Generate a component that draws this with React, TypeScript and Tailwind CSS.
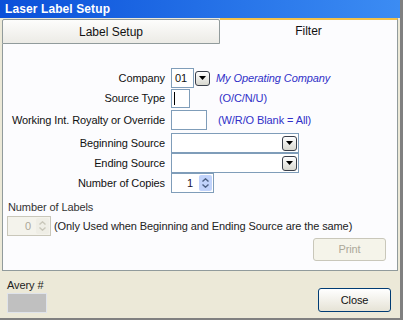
import React from "react";

const DropBtn = () => (
  <div className="w-[15px] h-[15px] rounded-[3px] border border-[#3a3f4a] bg-gradient-to-b from-[#ffffff] to-[#d8d8d0] flex items-center justify-center">
    <svg width="7" height="4" viewBox="0 0 7 4"><path d="M0 0h7L3.5 4z" fill="#000" /></svg>
  </div>
);

const Spin = ({ disabled }: { disabled?: boolean }) => (
  <div className={`w-[13px] h-[16px] flex flex-col items-center justify-center gap-[2px] rounded-[2px] ${disabled ? "bg-[#efeee6]" : "bg-[#c1d3fb]"}`}>
    <svg width="7" height="4" viewBox="0 0 7 4"><path d="M0.5 3.5L3.5 0.8L6.5 3.5" fill="none" stroke={disabled ? "#c9c7ba" : "#4d6185"} strokeWidth="1.4" /></svg>
    <svg width="7" height="4" viewBox="0 0 7 4"><path d="M0.5 0.5L3.5 3.2L6.5 0.5" fill="none" stroke={disabled ? "#c9c7ba" : "#4d6185"} strokeWidth="1.4" /></svg>
  </div>
);

const Row = ({ label, children, className }: { label: string; children: React.ReactNode; className: string }) => (
  <div className={`flex items-center ${className}`}>
    <div className="w-[163px] text-right pr-[1px] whitespace-nowrap">{label}</div>
    <div className="ml-[5px] flex items-center h-full">{children}</div>
  </div>
);

export default function App() {
  return (
    <div
      className="w-[403px] h-[320px] bg-[#ece9d8] text-[11px] tracking-[-0.1px] text-[#111] flex flex-col border-r-[3px] border-b-[2px] border-[#808080] overflow-hidden"
      style={{ fontFamily: '"Liberation Sans", Arial, sans-serif' }}
    >
      <div className="h-[18px] shrink-0 bg-gradient-to-r from-[#0b4fd9] to-[#3c8cf3] flex items-center pl-[5px]">
        <span className="text-white font-bold text-[12px] tracking-[0.1px]">Laser Label Setup</span>
      </div>
      <div className="ml-[2px] w-[396px] flex flex-col">
        <div className="h-[26px] flex">
          <div className="w-[218px] mt-[1px] h-[25px] border border-[#919b9c] rounded-t-[2px] bg-gradient-to-b from-[#fdfdfc] to-[#ecebe6] flex items-center justify-center text-[12px] tracking-[0px]">
            Label Setup
          </div>
          <div className="flex-1 h-[26px] bg-[#fcfcfe] border-t-[2px] border-t-[#f2c14a] border-r border-r-[#919b9c] flex items-center justify-center text-[12px] tracking-[0px] pb-[3px]">
            Filter
          </div>
        </div>
        <div className="h-[227px] bg-[#fcfcfe] border border-t-0 border-[#919b9c] flex flex-col">
          <Row label="Company" className="mt-[24px] h-[20px]">
            <div className="w-[23px] h-[20px] border border-[#7f9db9] bg-white flex items-center pl-[3px] text-[11px]">01</div>
            <div className="ml-[1px]"><DropBtn /></div>
            <span className="ml-[6px] italic text-[#3030c8]">My Operating Company</span>
          </Row>
          <Row label="Source Type" className="mt-[1px] h-[19px]">
            <div className="w-[19px] h-[19px] border border-[#7f9db9] bg-white flex items-center pl-[2px]">
              <div className="w-[1px] h-[13px] bg-black" />
            </div>
            <span className="ml-[29px] text-[#3030c8]">(O/C/N/U)</span>
          </Row>
          <Row label="Working Int. Royalty or Override" className="mt-[2px] h-[20px]">
            <div className="w-[36px] h-[20px] border border-[#7f9db9] bg-white" />
            <span className="ml-[11px] text-[#3030c8]">(W/R/O Blank = All)</span>
          </Row>
          <Row label="Beginning Source" className="mt-[3px] h-[20px]">
            <div className="w-[128px] h-[20px] border border-[#7f9db9] bg-white flex items-center justify-end pr-[1px]">
              <DropBtn />
            </div>
          </Row>
          <Row label="Ending Source" className="h-[20px]">
            <div className="w-[128px] h-[20px] border border-[#7f9db9] bg-white flex items-center justify-end pr-[1px]">
              <DropBtn />
            </div>
          </Row>
          <Row label="Number of Copies" className="h-[20px]">
            <div className="w-[43px] h-[20px] border border-[#7f9db9] bg-white flex items-center justify-end pr-[1px]">
              <span className="mr-[6px] text-[#1a1030]">1</span>
              <Spin />
            </div>
          </Row>
          <div className="mt-[7px] ml-[5px] h-[14px] leading-[14px] text-[#333]">Number of Labels</div>
          <div className="mt-[2px] ml-[4px] flex items-center">
            <div className="w-[44px] h-[20px] border border-[#c9c7ba] bg-[#f4f3ec] flex items-center justify-end pr-[1px]">
              <span className="mr-[5px] text-[#aca899]">0</span>
              <Spin disabled />
            </div>
            <span className="ml-[3px] text-[#222]">(Only Used when Beginning and Ending Source are the same)</span>
          </div>
          <div className="flex justify-end mt-[2px] mr-[11px]">
            <div className="w-[73px] h-[23px] border border-[#c9c7ba] rounded-[3px] bg-[#f5f4ea] flex items-center justify-center text-[#aca899]">Print</div>
          </div>
        </div>
      </div>
      <div className="flex-1 flex items-end pl-[7px] pr-[9px] pb-[5px]">
        <div className="flex flex-col">
          <span className="leading-[14px] text-[#222]">Avery #</span>
          <div className="mt-[1px] w-[40px] h-[20px] bg-[#c0c0c0] border border-[#dfe3ea]" />
        </div>
        <div className="ml-auto mb-[1px] w-[73px] h-[24px] rounded-[3px] border border-[#003c74] bg-gradient-to-b from-[#ffffff] to-[#e6e3d6] flex items-center justify-center">Close</div>
      </div>
    </div>
  );
}
